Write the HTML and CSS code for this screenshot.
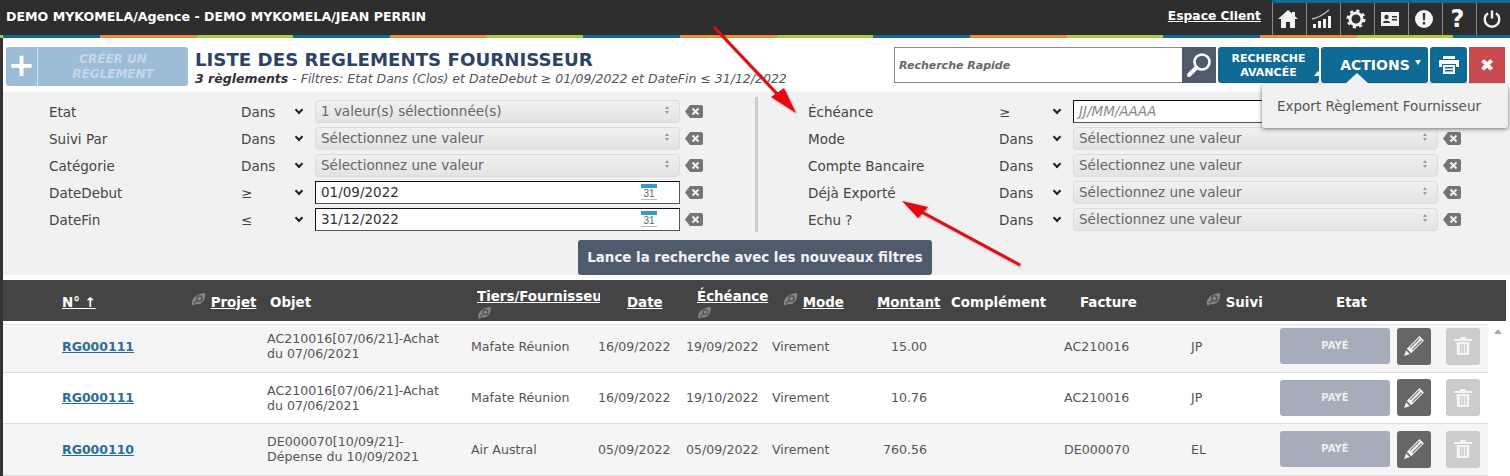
FILE: index.html
```html
<!DOCTYPE html>
<html lang="fr">
<head>
    <meta charset="UTF-8">
    <title>Liste des règlements fournisseur</title>
    <link rel="stylesheet" href="styles.css">
</head>
<body>
    <svg class="defs" width="0" height="0">
        <symbol id="i-leaf" viewBox="0 0 16 16">
            <path d="M1 13c-1-5 3-11 14-12 1 6-3 13-9 12-2 0-3 0-4 2z" fill="#858585"/>
            <circle cx="9" cy="7" r="2.800" fill="none" stroke="#4e4e4e" stroke-width="1.300"/>
            <path d="M3 12l4-3" stroke="#4e4e4e" stroke-width="1.200"/>
        </symbol>
        <symbol id="i-clear" viewBox="0 0 18 13">
            <path d="M5 0h11a2 2 0 0 1 2 2v9a2 2 0 0 1-2 2H5L0 6.500z" fill="#757575"/>
            <path d="M7.500 3.500l6 6M13.500 3.500l-6 6" stroke="#f1f1f1" stroke-width="2"/>
        </symbol>
        <symbol id="i-pencil" viewBox="0 0 20 20">
            <path d="M15 1l4 4L7.500 16.500l-4-4zM2.800 13.800l3.400 3.400L1 19z" fill="#f4f4f4"/>
            <path d="M6.500 11.500L15 3M8.500 13.500L17 5" stroke="#777" stroke-width="1"/>
        </symbol>
        <symbol id="i-trash" viewBox="0 0 20 20">
            <path d="M7.500 1h5l.5 2h6v2H1V3h6zM3.500 6h13L16 19H4zM7 8v9h1.500V8zm2.300 0v9h1.500V8zM12 8v9h1.500V8z" fill="#f4f4f4" fill-rule="evenodd"/>
        </symbol>
    </svg>

    <header class="topbar">
        <div class="topbar-title">DEMO MYKOMELA/Agence - DEMO MYKOMELA/JEAN PERRIN</div>
        <a class="client-link" href="#">Espace Client</a>
        <nav class="topnav">
            <a class="topnav-item" href="#"><svg width="22" height="20" viewBox="0 0 22 20"><path d="M11 1L1 10h3v9h5v-6h4v6h5v-9h3l-3-2.700V3h-3v1.600z" fill="#f2f2f2"/></svg></a>
            <a class="topnav-item" href="#"><svg width="22" height="20" viewBox="0 0 22 20"><path d="M2 15h3v4H2zM7 12h3v7H7zM12 10h3v9h-3zM17 7h3v12h-3z" fill="#f2f2f2"/><path d="M1 10c6-1 11-4 17-9" fill="none" stroke="#bbb" stroke-width="1.300"/></svg></a>
            <a class="topnav-item" href="#"><svg width="20" height="20" viewBox="0 0 20 20"><circle cx="10" cy="10" r="6" fill="none" stroke="#f2f2f2" stroke-width="3"/><circle cx="10" cy="10" r="8" fill="none" stroke="#f2f2f2" stroke-width="3" stroke-dasharray="3 3.300"/></svg></a>
            <a class="topnav-item" href="#"><svg width="20" height="16" viewBox="0 0 20 16"><path d="M1 1h18v14H1z" fill="#f2f2f2"/><circle cx="6.500" cy="6" r="2.200" fill="#333"/><path d="M3 12c0-3 7-3 7 0zM12 5h5v1.500h-5zM12 8h5v1.500h-5z" fill="#333"/></svg></a>
            <a class="topnav-item" href="#"><svg width="20" height="20" viewBox="0 0 20 20"><circle cx="10" cy="10" r="9" fill="#f6f6f6"/><path d="M8.700 4h2.600l-.4 7.500H9.100zM8.800 13h2.400v2.500H8.800z" fill="#333"/></svg></a>
            <a class="topnav-item topnav-help" href="#">?</a>
            <a class="topnav-item" href="#"><svg width="20" height="20" viewBox="0 0 20 20"><path d="M6 4.300a7.300 7.300 0 1 0 8 0" fill="none" stroke="#f2f2f2" stroke-width="2.400"/><path d="M10 1.500v8" stroke="#f2f2f2" stroke-width="2.400"/></svg></a>
        </nav>
    </header>
    <div class="stripe"></div>

    <main class="page">
        <section class="page-head">
            <a class="create-btn" href="#">
                <span class="create-plus">+</span>
                <span class="create-label">CRÉER UN<br>RÈGLEMENT</span>
            </a>
            <div class="page-titles">
                <h1>LISTE DES REGLEMENTS FOURNISSEUR</h1>
                <p><b>3 règlements</b> - Filtres: Etat Dans (Clos) et DateDebut ≥ 01/09/2022 et DateFin ≤ 31/12/2022</p>
            </div>
            <div class="head-tools">
                <div class="search">
                    <span class="search-input">Recherche Rapide</span>
                    <span class="search-btn"><svg width="28" height="28" viewBox="0 0 28 28"><circle cx="17" cy="11" r="7.500" fill="none" stroke="#fff" stroke-width="2.600"/><path d="M11.500 16.500L4 24" stroke="#fff" stroke-width="4" stroke-linecap="round"/></svg></span>
                </div>
                <a class="tool-btn tool-advanced" href="#"><span>RECHERCHE<br>AVANCÉE<i class="tri-up"></i></span></a>
                <a class="tool-btn tool-actions" href="#">ACTIONS <i class="tri-down"></i></a>
                <a class="tool-btn tool-print" href="#"><svg width="20" height="18" viewBox="0 0 20 18"><path d="M4 0h12v3H4zM1 4h18a1 1 0 0 1 1 1v6h-3V8H3v3H0V5a1 1 0 0 1 1-1zM4 9h12v9H4zm2 2v1.500h8V11zm0 3v1.500h8V14z" fill="#fff" fill-rule="evenodd"/></svg></a>
                <a class="tool-btn tool-close" href="#">✖</a>
            </div>
        </section>

        <section class="filters">
            <div class="filter-col">
                <div class="filter-row"><span class="f-label">Etat</span><span class="f-op">Dans</span><i class="chev"></i><span class="f-select">1 valeur(s) sélectionnée(s)</span><svg class="f-clear"><use href="#i-clear"/></svg></div>
                <div class="filter-row"><span class="f-label">Suivi Par</span><span class="f-op">Dans</span><i class="chev"></i><span class="f-select">Sélectionnez une valeur</span><svg class="f-clear"><use href="#i-clear"/></svg></div>
                <div class="filter-row"><span class="f-label">Catégorie</span><span class="f-op">Dans</span><i class="chev"></i><span class="f-select">Sélectionnez une valeur</span><svg class="f-clear"><use href="#i-clear"/></svg></div>
                <div class="filter-row"><span class="f-label">DateDebut</span><span class="f-op">≥</span><i class="chev"></i><span class="f-date">01/09/2022<span class="f-cal">31</span></span><svg class="f-clear"><use href="#i-clear"/></svg></div>
                <div class="filter-row"><span class="f-label">DateFin</span><span class="f-op">≤</span><i class="chev"></i><span class="f-date">31/12/2022<span class="f-cal">31</span></span><svg class="f-clear"><use href="#i-clear"/></svg></div>
            </div>
            <div class="filter-sep"></div>
            <div class="filter-col">
                <div class="filter-row"><span class="f-label">Échéance</span><span class="f-op">≥</span><i class="chev"></i><span class="f-date f-empty">JJ/MM/AAAA</span><svg class="f-clear"><use href="#i-clear"/></svg></div>
                <div class="filter-row"><span class="f-label">Mode</span><span class="f-op">Dans</span><i class="chev"></i><span class="f-select">Sélectionnez une valeur</span><svg class="f-clear"><use href="#i-clear"/></svg></div>
                <div class="filter-row"><span class="f-label">Compte Bancaire</span><span class="f-op">Dans</span><i class="chev"></i><span class="f-select">Sélectionnez une valeur</span><svg class="f-clear"><use href="#i-clear"/></svg></div>
                <div class="filter-row"><span class="f-label">Déjà Exporté</span><span class="f-op">Dans</span><i class="chev"></i><span class="f-select">Sélectionnez une valeur</span><svg class="f-clear"><use href="#i-clear"/></svg></div>
                <div class="filter-row"><span class="f-label">Echu ?</span><span class="f-op">Dans</span><i class="chev"></i><span class="f-select">Sélectionnez une valeur</span><svg class="f-clear"><use href="#i-clear"/></svg></div>
            </div>
            <div class="filter-submit"><a class="submit-btn" href="#">Lance la recherche avec les nouveaux filtres</a></div>
        </section>

        <table class="grid">
            <colgroup>
                <col class="c-num"><col class="c-projet"><col class="c-objet"><col class="c-tiers"><col class="c-date"><col class="c-ech"><col class="c-mode"><col class="c-montant"><col class="c-compl"><col class="c-fact"><col class="c-suivi"><col class="c-etat"><col class="c-edit"><col class="c-del"><col class="c-scroll">
            </colgroup>
            <thead>
                <tr>
                    <th class="h-num"><a href="#">N° ↑</a></th>
                    <th class="h-projet"><svg class="leaf"><use href="#i-leaf"/></svg> <a href="#">Projet</a></th>
                    <th class="h-objet">Objet</th>
                    <th class="h-tiers h-two"><div class="clip"><a href="#">Tiers/Fournisseur</a></div><svg class="leaf"><use href="#i-leaf"/></svg></th>
                    <th class="h-date"><a href="#">Date</a></th>
                    <th class="h-ech h-two"><a href="#">Échéance</a><svg class="leaf"><use href="#i-leaf"/></svg></th>
                    <th class="h-mode"><svg class="leaf"><use href="#i-leaf"/></svg> <a href="#">Mode</a></th>
                    <th class="h-montant"><a href="#">Montant</a></th>
                    <th class="h-compl">Complément</th>
                    <th class="h-fact">Facture</th>
                    <th class="h-suivi"><svg class="leaf"><use href="#i-leaf"/></svg> Suivi</th>
                    <th class="h-etat">Etat</th>
                    <th></th><th></th><th></th>
                </tr>
            </thead>
            <tbody>
                <tr>
                    <td class="d-num"><a href="#">RG000111</a></td><td></td>
                    <td class="d-objet">AC210016[07/06/21]-Achat<br>du 07/06/2021</td>
                    <td class="d-tiers">Mafate Réunion</td><td class="d-date">16/09/2022</td><td class="d-ech">19/09/2022</td><td class="d-mode">Virement</td><td class="d-montant">15.00</td><td></td>
                    <td class="d-fact">AC210016</td><td class="d-suivi">JP</td>
                    <td class="d-etat"><span class="paid">PAYÉ</span></td>
                    <td class="d-act"><span class="act act-edit"><svg width="22" height="22"><use href="#i-pencil"/></svg></span></td>
                    <td class="d-act"><span class="act act-del"><svg width="20" height="20"><use href="#i-trash"/></svg></span></td>
                    <td class="d-scroll"><i class="scroll-up"></i></td>
                </tr>
                <tr>
                    <td class="d-num"><a href="#">RG000111</a></td><td></td>
                    <td class="d-objet">AC210016[07/06/21]-Achat<br>du 07/06/2021</td>
                    <td class="d-tiers">Mafate Réunion</td><td class="d-date">16/09/2022</td><td class="d-ech">19/10/2022</td><td class="d-mode">Virement</td><td class="d-montant">10.76</td><td></td>
                    <td class="d-fact">AC210016</td><td class="d-suivi">JP</td>
                    <td class="d-etat"><span class="paid">PAYÉ</span></td>
                    <td class="d-act"><span class="act act-edit"><svg width="22" height="22"><use href="#i-pencil"/></svg></span></td>
                    <td class="d-act"><span class="act act-del"><svg width="20" height="20"><use href="#i-trash"/></svg></span></td>
                    <td class="d-scroll"></td>
                </tr>
                <tr>
                    <td class="d-num"><a href="#">RG000110</a></td><td></td>
                    <td class="d-objet">DE000070[10/09/21]-<br>Dépense du 10/09/2021</td>
                    <td class="d-tiers">Air Austral</td><td class="d-date">05/09/2022</td><td class="d-ech">05/09/2022</td><td class="d-mode">Virement</td><td class="d-montant">760.56</td><td></td>
                    <td class="d-fact">DE000070</td><td class="d-suivi">EL</td>
                    <td class="d-etat"><span class="paid">PAYÉ</span></td>
                    <td class="d-act"><span class="act act-edit"><svg width="22" height="22"><use href="#i-pencil"/></svg></span></td>
                    <td class="d-act"><span class="act act-del"><svg width="20" height="20"><use href="#i-trash"/></svg></span></td>
                    <td class="d-scroll"></td>
                </tr>
            </tbody>
        </table>
    </main>

    <!-- menu du bouton actions -->
    <div class="actions-menu"><i class="menu-tip"></i>Export Règlement Fournisseur</div>

    <!-- fleches rouges d'annotation -->
    <svg class="annot" width="1510" height="476" viewBox="0 0 1510 476">
        <path d="M714 27L781 98" stroke="#dc0f14" stroke-width="3"/>
        <path d="M796 113L771 97 784 88z" fill="#e5090f"/>
        <path d="M1020 265L918 210" stroke="#dc0f14" stroke-width="3"/>
        <path d="M902 201L928 207 918 218z" fill="#e5090f"/>
    </svg>
</body>
</html>
```

FILE: styles.css
```css
html, body {
    margin: 0;
    padding: 0;
    height: 100%;
    overflow: hidden;
    background: #333;
    color: #444;
    font-family: "DejaVu Sans", Verdana, sans-serif;
    font-size: 12px;
}

a {
    color: inherit;
}

.defs {
    display: block;
    height: 0;
}

/* barre du haut */
.topbar {
    display: flex;
    align-items: center;
    height: 35px;
    background: #2d2d2d;
    color: #fff;
}

.topbar-title {
    margin: -3px auto 0 6px;
    font-size: 12.600px;
    font-weight: bold;
}

.client-link {
    margin: -3px 11px 0 0;
    font-size: 12.300px;
    font-weight: bold;
}

.topnav {
    display: flex;
    height: 35px;
    border-top: 3px solid #0f6a96;
    box-sizing: border-box;
}

.topnav-item {
    display: flex;
    align-items: center;
    justify-content: center;
    box-sizing: border-box;
    width: 34px;
    padding-right: 4px;
    border-left: 1px solid #8a8a8a;
    text-decoration: none;
}

.topnav-help {
    color: #f4f4f4;
    font-size: 24px;
    font-weight: bold;
}

.stripe {
    height: 3px;
    background: repeating-linear-gradient(90deg, #a8cb3a 0 3.300px, #0f6a96 3.300px 100px, #ef8a35 100px 196.700px, #a8cb3a 196.700px 290px);
}

.page {
    margin-left: 3px;
    background: #fff;
    height: 438px;
    overflow: hidden;
}

/* entete */
.page-head {
    display: flex;
    height: 54px;
    box-sizing: border-box;
    padding: 9px 5px 0 3px;
}

.create-btn {
    display: flex;
    width: 182px;
    height: 39px;
    background: #9dbcd8;
    border-radius: 3px;
    text-decoration: none;
    margin-right: 7px;
}

.create-plus {
    width: 31px;
    border-right: 1px solid #d0e0ee;
    color: #fff;
    font-size: 32px;
    font-weight: bold;
    line-height: 37px;
    text-align: center;
}

.create-label {
    flex: 1;
    color: #c4d7e8;
    font-size: 12px;
    font-style: italic;
    font-weight: bold;
    text-align: center;
    line-height: 15px;
    padding-top: 5px;
}

.page-titles h1 {
    margin: 2px 0 0;
    color: #2b4464;
    font-size: 18.200px;
    line-height: 22px;
    white-space: nowrap;
}

.page-titles p {
    margin: 0;
    color: #555;
    font-size: 12.500px;
    font-style: italic;
    line-height: 15px;
    white-space: nowrap;
}

.page-titles b {
    color: #333;
}

.head-tools {
    display: flex;
    gap: 2px;
    margin-left: auto;
    height: 36px;
}

.search {
    display: flex;
}

.search-input {
    width: 283px;
    border: 1px solid #888;
    border-right: 0;
    background: #fff;
    color: #666;
    font-size: 11px;
    font-style: italic;
    font-weight: bold;
    line-height: 36px;
    padding-left: 4px;
}

.search-btn {
    display: flex;
    align-items: center;
    justify-content: center;
    width: 34px;
    background: #4f5a6d;
}

.tool-btn {
    display: flex;
    align-items: center;
    justify-content: center;
    box-sizing: border-box;
    background: #0f6a96;
    color: #fff;
    border-radius: 3px;
    font-weight: bold;
    text-align: center;
    text-decoration: none;
}

.tool-advanced {
    width: 101px;
    padding-top: 2px;
    font-size: 11px;
    line-height: 14px;
}

.tool-actions {
    width: 107px;
    font-size: 14px;
    gap: 5px;
    padding-left: 12px;
}

.tool-print {
    width: 37px;
}

.tool-close {
    width: 36px;
    background: #c9494f;
    font-size: 17px;
    border-radius: 0;
}

.tri-up,
.tri-down,
.scroll-up {
    display: inline-block;
    width: 0;
    height: 0;
    border-left: 4px solid transparent;
    border-right: 4px solid transparent;
}

.tri-up {
    border-bottom: 5px solid #fff;
    margin: 0 -25px 0 17px;
}

.tri-down {
    border-left-width: 3px;
    border-right-width: 3px;
    border-top: 5px solid #fff;
    margin-top: -6px;
}

/* filtres */
.filters {
    display: grid;
    grid-template-columns: 752px 3px 1fr;
    background: #f1f1f1;
    height: 183px;
    box-sizing: border-box;
    padding-top: 6px;
}

.filter-col {
    padding-left: 46px;
}

.filter-col:nth-child(3) {
    padding-left: 50px;
}

.filter-col:nth-child(3) .f-label {
    width: 191px;
}

.filter-row {
    display: flex;
    align-items: center;
    height: 27px;
    color: #444;
    font-size: 13.500px;
}

.f-label {
    width: 192px;
}

.f-op {
    width: 50px;
}

.chev {
    width: 6px;
    height: 6px;
    box-sizing: border-box;
    border-right: 2px solid #222;
    border-bottom: 2px solid #222;
    transform: rotate(45deg);
    margin: -3px 13px 0 5px;
}

.f-select,
.f-date {
    display: block;
    position: relative;
    box-sizing: border-box;
    width: 365px;
    height: 23px;
    line-height: 21px;
    padding-left: 5px;
}

.f-select {
    background: linear-gradient(#f0f0f0, #e3e3e3);
    border: 1px solid #dcdcdc;
    border-radius: 4px;
    color: #666;
}

.f-select::before,
.f-select::after {
    content: "";
    position: absolute;
    right: 10px;
    width: 0;
    height: 0;
    border-left: 2.500px solid transparent;
    border-right: 2.500px solid transparent;
}

.f-select::before {
    top: 5px;
    border-bottom: 3px solid #999;
}

.f-select::after {
    top: 10px;
    border-top: 3px solid #999;
}

.f-date {
    background: #fff;
    border: 1px solid #555;
    border-top-color: #111;
    border-left-color: #111;
    color: #333;
}

.f-empty {
    color: #888;
    font-style: italic;
}

.f-cal {
    position: absolute;
    right: 22px;
    top: 2px;
    width: 16px;
    height: 11px;
    border-top: 4px solid #2e9fc4;
    border-bottom: 1px solid #bbb;
    color: #666;
    font-family: "Liberation Sans", sans-serif;
    font-size: 10px;
    line-height: 11px;
    text-align: center;
}

.f-clear {
    width: 18px;
    height: 13px;
    margin-left: 5px;
}

.filter-sep {
    width: 3px;
    height: 135px;
    margin-top: -1px;
    background: #ccc;
}

.filter-submit {
    grid-column: 1 / -1;
    display: flex;
    margin-top: 7px;
    padding-left: 575px;
}

.submit-btn {
    width: 354px;
    height: 35px;
    background: #4f5a6d;
    border-radius: 3px;
    color: #f2f2f2;
    font-size: 13.400px;
    font-weight: bold;
    line-height: 35px;
    text-align: center;
    text-decoration: none;
}

/* tableau */
.grid {
    table-layout: fixed;
    width: 1503px;
    margin-top: 5px;
    border-collapse: separate;
    border-spacing: 0;
}

.c-num { width: 182px; }
.c-projet { width: 80px; }
.c-objet { width: 200px; }
.c-tiers { width: 130px; }
.c-date { width: 85px; }
.c-ech { width: 88px; }
.c-mode { width: 102px; }
.c-montant { width: 75px; }
.c-compl { width: 110px; }
.c-fact { width: 130px; }
.c-suivi { width: 90px; }
.c-etat { width: 120px; }
.c-edit { width: 45px; }
.c-del { width: 48px; }

.grid th {
    height: 41px;
    box-sizing: border-box;
    padding: 5px 0 0;
    background: #444;
    color: #fff;
    font-size: 13.400px;
    font-weight: bold;
    text-align: left;
    white-space: nowrap;
    line-height: 16px;
}

.leaf {
    width: 15px;
    height: 15px;
    vertical-align: top;
    margin-top: -3px;
}

.grid .h-two {
    vertical-align: top;
    padding-top: 9px;
}

.h-two .leaf {
    display: block;
    height: 14px;
    margin-top: 1px;
}

.grid .h-num { padding-left: 59px; }
.grid .h-projet { padding-left: 6px; }
.grid .h-objet { padding-left: 5px; }
.grid .h-tiers { padding-left: 12px; }
.grid .h-date { padding-left: 32px; }
.grid .h-ech { padding-left: 17px; }
.grid .h-mode { padding-left: 15px; }
.grid .h-montant { padding-left: 7px; }
.grid .h-compl { padding-left: 6px; }
.grid .h-fact { padding-left: 25px; }
.grid .h-suivi { padding-left: 21px; }
.grid .h-etat { padding-left: 61px; }

.clip {
    width: 123px;
    overflow: hidden;
}

.grid td {
    height: 51.500px;
    box-sizing: border-box;
    padding: 0;
    color: #555;
    font-size: 12.600px;
    line-height: 15px;
    border-bottom: 1px solid #ddd;
    white-space: nowrap;
}

.grid tbody tr:nth-child(odd) td {
    background: #f5f5f5;
}

.grid tbody tr:first-child td {
    box-shadow: inset 0 3px 0 #fff, inset 0 4px 0 #e6e6e6;
}

.grid .d-scroll,
.grid tbody tr:nth-child(odd) .d-scroll {
    background: #fff;
    border-bottom: 0;
    box-shadow: none;
    vertical-align: top;
}

.scroll-up {
    border-bottom: 5px solid #aaa;
    margin: 8px 0 0 6px;
}

.grid .d-num { padding-left: 59px; }
.d-num a {
    color: #2a6c9a;
    font-size: 12.500px;
    font-weight: bold;
}

.grid .d-objet { padding-left: 2px; }
.grid .d-tiers { padding-left: 6px; }
.grid .d-date { padding-left: 3px; }
.grid .d-ech { padding-left: 6px; }
.grid .d-mode { padding-left: 4px; }
.grid .d-montant { text-align: right; padding-right: 18px; }
.grid .d-fact { padding-left: 9px; }
.grid .d-suivi { padding-left: 6px; }
.grid .d-etat { padding-left: 5px; }

.paid {
    display: block;
    width: 110px;
    height: 36px;
    background: #a6adba;
    border-radius: 3px;
    color: #eee;
    font-size: 10px;
    font-weight: bold;
    line-height: 36px;
    text-align: center;
}

.act {
    display: flex;
    align-items: center;
    justify-content: center;
    width: 34px;
    height: 37px;
    border-radius: 3px;
}

.act-edit {
    background: #666;
    margin-left: 2px;
}

.act-del {
    background: #ccc;
    margin-left: 6px;
}

/* menu actions */
.actions-menu {
    position: absolute;
    left: 1262px;
    top: 84px;
    width: 246px;
    height: 44px;
    box-sizing: border-box;
    background: #f1f1f1;
    border-radius: 3px;
    box-shadow: 0 1px 4px #0008;
    color: #555;
    font-size: 13.500px;
    line-height: 44px;
    padding-left: 15px;
}

.menu-tip {
    position: absolute;
    left: 83px;
    top: -11px;
    width: 0;
    height: 0;
    border-left: 12px solid transparent;
    border-right: 12px solid transparent;
    border-bottom: 11px solid #f1f1f1;
}

.annot {
    position: absolute;
    left: 0;
    top: 0;
    pointer-events: none;
    filter: drop-shadow(1px 1px 1px #0005);
}
```
